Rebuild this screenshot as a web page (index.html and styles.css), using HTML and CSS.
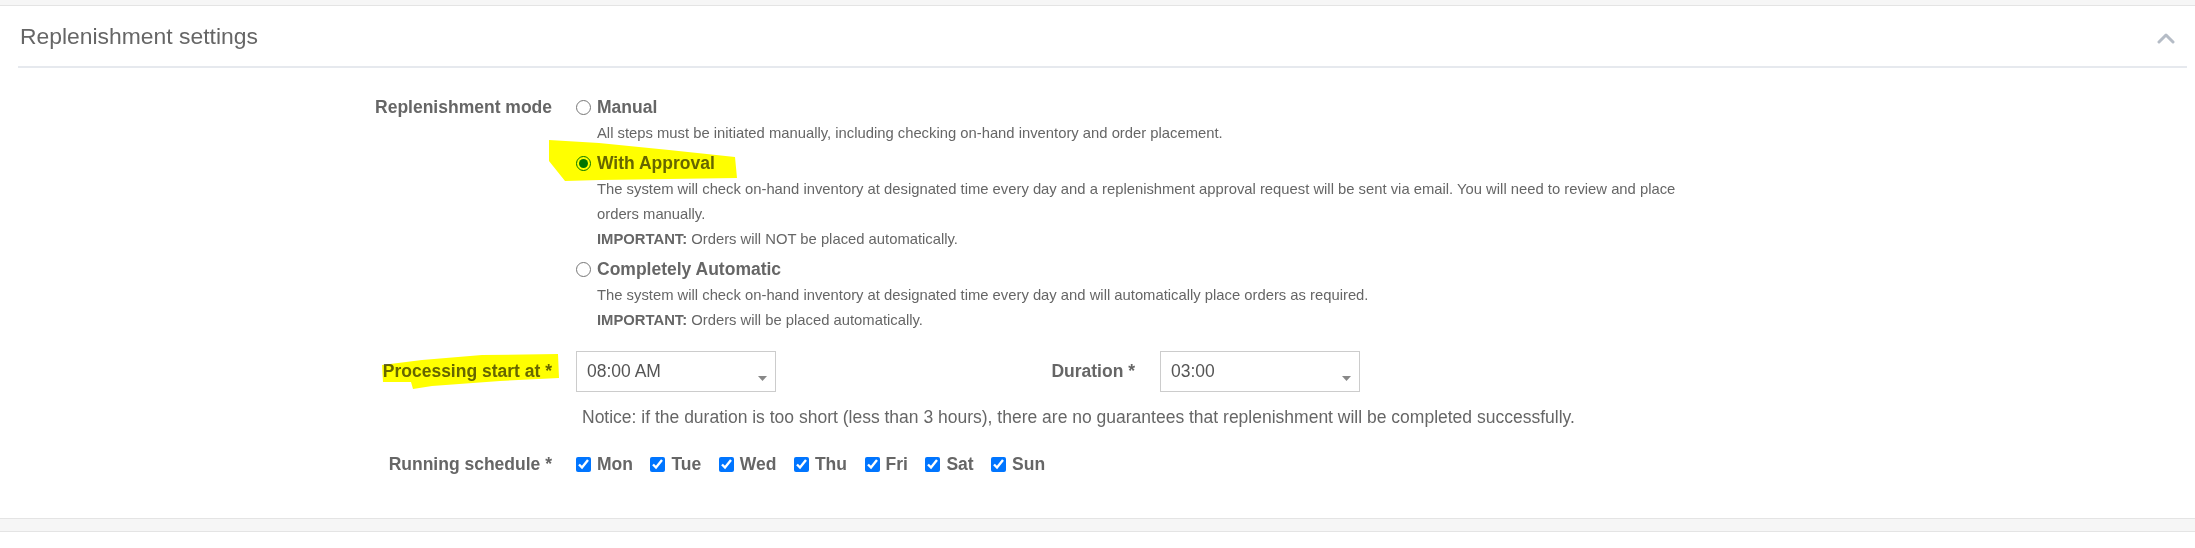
FILE: index.html
```html
<!DOCTYPE html>
<html lang="en">
<head>
<meta charset="utf-8">
<title>Replenishment settings</title>
<link rel="stylesheet" href="styles.css">
</head>
<body>
<div class="topbar"></div>
<section class="panel">
  <div class="panel-head">
    <h2 class="panel-title">Replenishment settings</h2>
    <svg class="chevron" width="18" height="12" viewBox="0 0 18 12"><polyline points="2,10 9,3 16,10" fill="none" stroke="#b5bcc6" stroke-width="3" stroke-linecap="round" stroke-linejoin="round"/></svg>
  </div>
  <div class="panel-body">
    <div class="form-row">
      <div class="label">Replenishment mode</div>
      <div class="control">
        <div class="option">
          <label class="option-title"><input type="radio" name="mode">Manual</label>
          <div class="desc-group">
            <div class="desc">All steps must be initiated manually, including checking on-hand inventory and order placement.</div>
          </div>
        </div>
        <div class="option">
          <label class="option-title"><input type="radio" name="mode" checked>With Approval
            <svg class="hl hl-approval" width="190" height="42" viewBox="0 0 190 42"><polygon points="0,0 50,3 120,10 186,17 188,38 120,39 51,40 16,41 0,21" fill="#ffff00"/></svg>
          </label>
          <div class="desc-group">
            <div class="desc">The system will check on-hand inventory at designated time every day and a replenishment approval request will be sent via email. You will need to review and place orders manually.</div>
            <div class="desc"><b>IMPORTANT:</b> Orders will NOT be placed automatically.</div>
          </div>
        </div>
        <div class="option">
          <label class="option-title"><input type="radio" name="mode">Completely Automatic</label>
          <div class="desc-group">
            <div class="desc">The system will check on-hand inventory at designated time every day and will automatically place orders as required.</div>
            <div class="desc"><b>IMPORTANT:</b> Orders will be placed automatically.</div>
          </div>
        </div>
      </div>
    </div>

    <div class="form-row time-form">
      <div class="label label-tall">Processing start at *
        <svg class="hl hl-processing" width="178" height="38" viewBox="0 0 178 38"><polygon points="0,12 40,7 100,2 176,1 177,25 118,28 50,33 31,36 29,29 1,29" fill="#ffff00"/></svg>
      </div>
      <div class="control">
        <div class="time-row">
          <div class="select"><span>08:00 AM</span><svg class="caret" width="9" height="5" viewBox="0 0 9 5"><polygon points="0,0 9,0 4.5,5" fill="#888"/></svg></div>
          <div class="dur-label">Duration *</div>
          <div class="select"><span>03:00</span><svg class="caret" width="9" height="5" viewBox="0 0 9 5"><polygon points="0,0 9,0 4.5,5" fill="#888"/></svg></div>
        </div>
        <div class="notice">Notice: if the duration is too short (less than 3 hours), there are no guarantees that replenishment will be completed successfully.</div>
      </div>
    </div>

    <div class="form-row schedule-row">
      <div class="label">Running schedule *</div>
      <div class="control days">
        <label class="day"><input type="checkbox" checked>Mon</label>
        <label class="day"><input type="checkbox" checked>Tue</label>
        <label class="day"><input type="checkbox" checked>Wed</label>
        <label class="day"><input type="checkbox" checked>Thu</label>
        <label class="day"><input type="checkbox" checked>Fri</label>
        <label class="day"><input type="checkbox" checked>Sat</label>
        <label class="day"><input type="checkbox" checked>Sun</label>
      </div>
    </div>
  </div>
</section>
<div class="band"></div>
<div class="next-panel"></div>
</body>
</html>
```

FILE: styles.css
```css
html, body {
  margin: 0;
  padding: 0;
  background: #fff;
}
body {
  font-family: "Liberation Sans", Arial, sans-serif;
  color: #666;
}
.topbar {
  height: 5px;
  background: #f6f6f6;
  border-bottom: 1px solid #e4e4e4;
}
.panel {
  background: #fff;
}
.panel-head {
  display: flex;
  align-items: center;
  justify-content: space-between;
  height: 60px;
  margin: 0 8px 0 18px;
  padding: 0 12px 0 2px;
  border-bottom: 2px solid #e6e9ee;
}
.panel-title {
  margin: 0;
  font-size: 22.9px;
  font-weight: normal;
  color: #666;
}
.chevron {
  margin-top: 4px;
}
.panel-body {
  padding: 27px 0 42px 352px;
}
.form-row {
  display: flex;
  align-items: flex-start;
}
.label {
  position: relative;
  width: 200px;
  flex: none;
  margin-right: 24px;
  text-align: right;
  font-weight: bold;
  font-size: 17.5px;
  line-height: 24px;
  color: #666;
}
.label-tall {
  line-height: 41px;
}
.control {
  flex: none;
}
.option + .option {
  margin-top: 5px;
}
.option-title {
  position: relative;
  display: flex;
  align-items: center;
  gap: 6px;
  font-weight: bold;
  font-size: 17.5px;
  line-height: 24px;
  color: #666;
}
input[type="radio"],
input[type="checkbox"] {
  width: 15px;
  height: 15px;
  margin: 0;
  flex: none;
}
.desc-group {
  padding-top: 2px;
}
.desc {
  padding-left: 21px;
  max-width: 1105px;
  font-size: 14.8px;
  line-height: 25px;
  color: #666;
}
.desc b {
  color: #666;
}
.hl {
  position: absolute;
  mix-blend-mode: multiply;
  pointer-events: none;
}
.hl-approval {
  left: -27px;
  top: -11px;
}
.hl-processing {
  left: 30px;
  top: 2px;
}
.time-form {
  margin-top: 18px;
}
.time-row {
  display: flex;
  align-items: center;
}
.select {
  box-sizing: border-box;
  width: 200px;
  height: 41px;
  border: 1px solid #ccc;
  background: #fff;
  display: flex;
  align-items: center;
  justify-content: space-between;
  padding: 0 8px 0 10px;
  font-size: 17.5px;
  color: #555;
}
.caret {
  margin-top: 14px;
}
.dur-label {
  width: 359px;
  margin-right: 25px;
  text-align: right;
  font-weight: bold;
  font-size: 17.5px;
  color: #666;
}
.notice {
  margin-top: 15px;
  padding-left: 6px;
  font-size: 17.5px;
  line-height: 20px;
  color: #666;
}
.schedule-row {
  margin-top: 25px;
}
.days {
  display: flex;
  align-items: center;
}
.day {
  display: flex;
  align-items: center;
  gap: 6px;
  margin-right: 17.5px;
  font-weight: bold;
  font-size: 17.5px;
  line-height: 24px;
  color: #666;
}
.band {
  height: 12px;
  background: #f6f6f6;
  border-top: 1px solid #e4e4e4;
  border-bottom: 1px solid #e4e4e4;
}
.next-panel {
  height: 20px;
  background: #fff;
}
```
